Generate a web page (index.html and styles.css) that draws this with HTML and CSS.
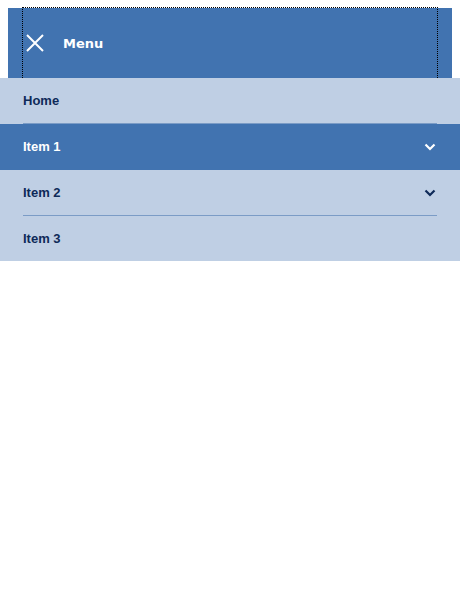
FILE: index.html
```html
<!DOCTYPE html>
<html>
<head>
<meta charset="utf-8">
<link rel="stylesheet" href="styles.css">
</head>
<body>
<header class="bar">
  <div class="toggle">
    <svg class="close" width="18" height="18" viewBox="0 0 18 18"><path d="M1 1L17 17M17 1L1 17" stroke="#fff" stroke-width="2" fill="none"/></svg>
    <span class="title">Menu</span>
  </div>
</header>
<ul class="menu">
  <li class="item"><div class="row">Home</div></li>
  <li class="item active"><div class="row">Item 1<svg class="chev" width="12" height="8" viewBox="0 0 12 8"><path d="M1.5 1.5L6 6L10.5 1.5" stroke="currentColor" stroke-width="2.2" fill="none"/></svg></div></li>
  <li class="item"><div class="row">Item 2<svg class="chev" width="12" height="8" viewBox="0 0 12 8"><path d="M1.5 1.5L6 6L10.5 1.5" stroke="currentColor" stroke-width="2.2" fill="none"/></svg></div></li>
  <li class="item last"><div class="row">Item 3</div></li>
</ul>
</body>
</html>
```
FILE: styles.css
```css
html, body { margin: 0; padding: 0; background: #fff; }
body { font-family: "Liberation Sans", Arial, sans-serif; }
.bar {
  display: flow-root;
  background: #4173b0;
  height: 70px;
  margin: 8px 8px 0 8px;
  padding: 0 14px;
}
.toggle {
  box-sizing: border-box;
  height: 71px;
  margin-top: -1px;
  border: 1px dotted #000;
  border-bottom: none;
  display: flex;
  align-items: center;
  padding-left: 3px;
  gap: 19px;
}
.close { display: block; }
.title {
  font-family: "DejaVu Sans", Verdana, sans-serif;
  font-weight: bold;
  font-size: 13px;
  color: #fff;
}
.menu {
  list-style: none;
  margin: 0;
  padding: 0;
  background: #bfcfe4;
}
.item { padding: 0 23px; }
.row {
  height: 45px;
  border-bottom: 1px solid #7b9cc6;
  display: flex;
  align-items: center;
  justify-content: space-between;
  font-size: 13px;
  font-weight: bold;
  color: #0e2a58;
}
.item.active { background: #4173b0; }
.item.active .row { color: #fff; border-bottom-color: #4173b0; }
.item.last .row { border-bottom: none; height: 45px; }
.chev { display: block; margin-right: 1px; }
```
